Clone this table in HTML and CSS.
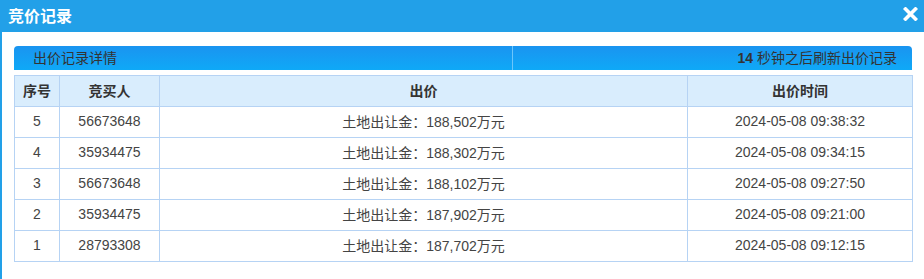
FILE: index.html
```html
<!DOCTYPE html>
<html lang="zh-CN">
<head>
<meta charset="utf-8">
<title>竞价记录</title>
<link rel="stylesheet" href="styles.css">
</head>
<body>
<div class="dialog">
  <div class="titlebar">
    <span class="title">竞价记录</span>
    <svg class="close" width="15" height="14" viewBox="0 0 15 14"><path d="M2.5 2 L12.5 12 M12.5 2 L2.5 12" stroke="#fff" stroke-width="3.6" stroke-linecap="square" fill="none"/></svg>
  </div>
  <div class="content">
    <div class="bar">
      <div class="bar-left">出价记录详情</div>
      <div class="bar-right"><b>14</b> 秒钟之后刷新出价记录</div>
    </div>
    <table class="records">
      <thead>
        <tr><th class="c1">序号</th><th class="c2">竞买人</th><th class="c3">出价</th><th class="c4">出价时间</th></tr>
      </thead>
      <tbody>
        <tr><td>5</td><td>56673648</td><td>土地出让金：188,502万元</td><td>2024-05-08 09:38:32</td></tr>
        <tr><td>4</td><td>35934475</td><td>土地出让金：188,302万元</td><td>2024-05-08 09:34:15</td></tr>
        <tr><td>3</td><td>56673648</td><td>土地出让金：188,102万元</td><td>2024-05-08 09:27:50</td></tr>
        <tr><td>2</td><td>35934475</td><td>土地出让金：187,902万元</td><td>2024-05-08 09:21:00</td></tr>
        <tr><td>1</td><td>28793308</td><td>土地出让金：187,702万元</td><td>2024-05-08 09:12:15</td></tr>
      </tbody>
    </table>
  </div>
</div>
</body>
</html>
```
FILE: styles.css
```css
html, body {
  margin: 0;
  padding: 0;
  background: #fff;
}
body {
  font-family: "Liberation Sans", "Noto Sans CJK SC", sans-serif;
  font-size: 14px;
  color: #333;
}
.dialog {
  width: 924px;
  height: 279px;
  box-sizing: border-box;
}
.titlebar {
  height: 32px;
  background: #22a0e8;
  display: flex;
  align-items: center;
  justify-content: space-between;
  padding: 0 6px 2px 8px;
  box-sizing: border-box;
}
.title {
  color: #fff;
  font-size: 16px;
  font-weight: bold;
}
.close {
  display: block;
  margin-top: -2px;
}
.content {
  border-left: 2px solid #22a0e8;
  padding: 14px 12px 0 12px;
  height: 247px;
  box-sizing: border-box;
}
.bar {
  height: 24px;
  display: flex;
  background: linear-gradient(#1a94f0, #0fa9f7);
  border-radius: 4px 4px 0 0;
  line-height: 24px;
  color: #333;
}
.bar-left {
  width: 499px;
  padding-left: 19px;
  box-sizing: border-box;
  border-right: 1px solid #6cc6fb;
}
.bar-right {
  flex: 1;
  text-align: right;
  padding-right: 15px;
}
.records {
  margin-top: 5px;
  width: 898px;
  border-collapse: collapse;
  table-layout: fixed;
}
.records th, .records td {
  border: 1px solid #b6d3f4;
  height: 31px;
  padding: 0 0 2px 0;
  text-align: center;
  box-sizing: border-box;
}
.records th {
  background: #d9edfd;
  font-weight: bold;
  color: #333;
}
.records td {
  color: #444;
}
.c1 { width: 45px; }
.c2 { width: 100px; }
.c3 { width: 528px; }
.c4 { width: 225px; }
```
